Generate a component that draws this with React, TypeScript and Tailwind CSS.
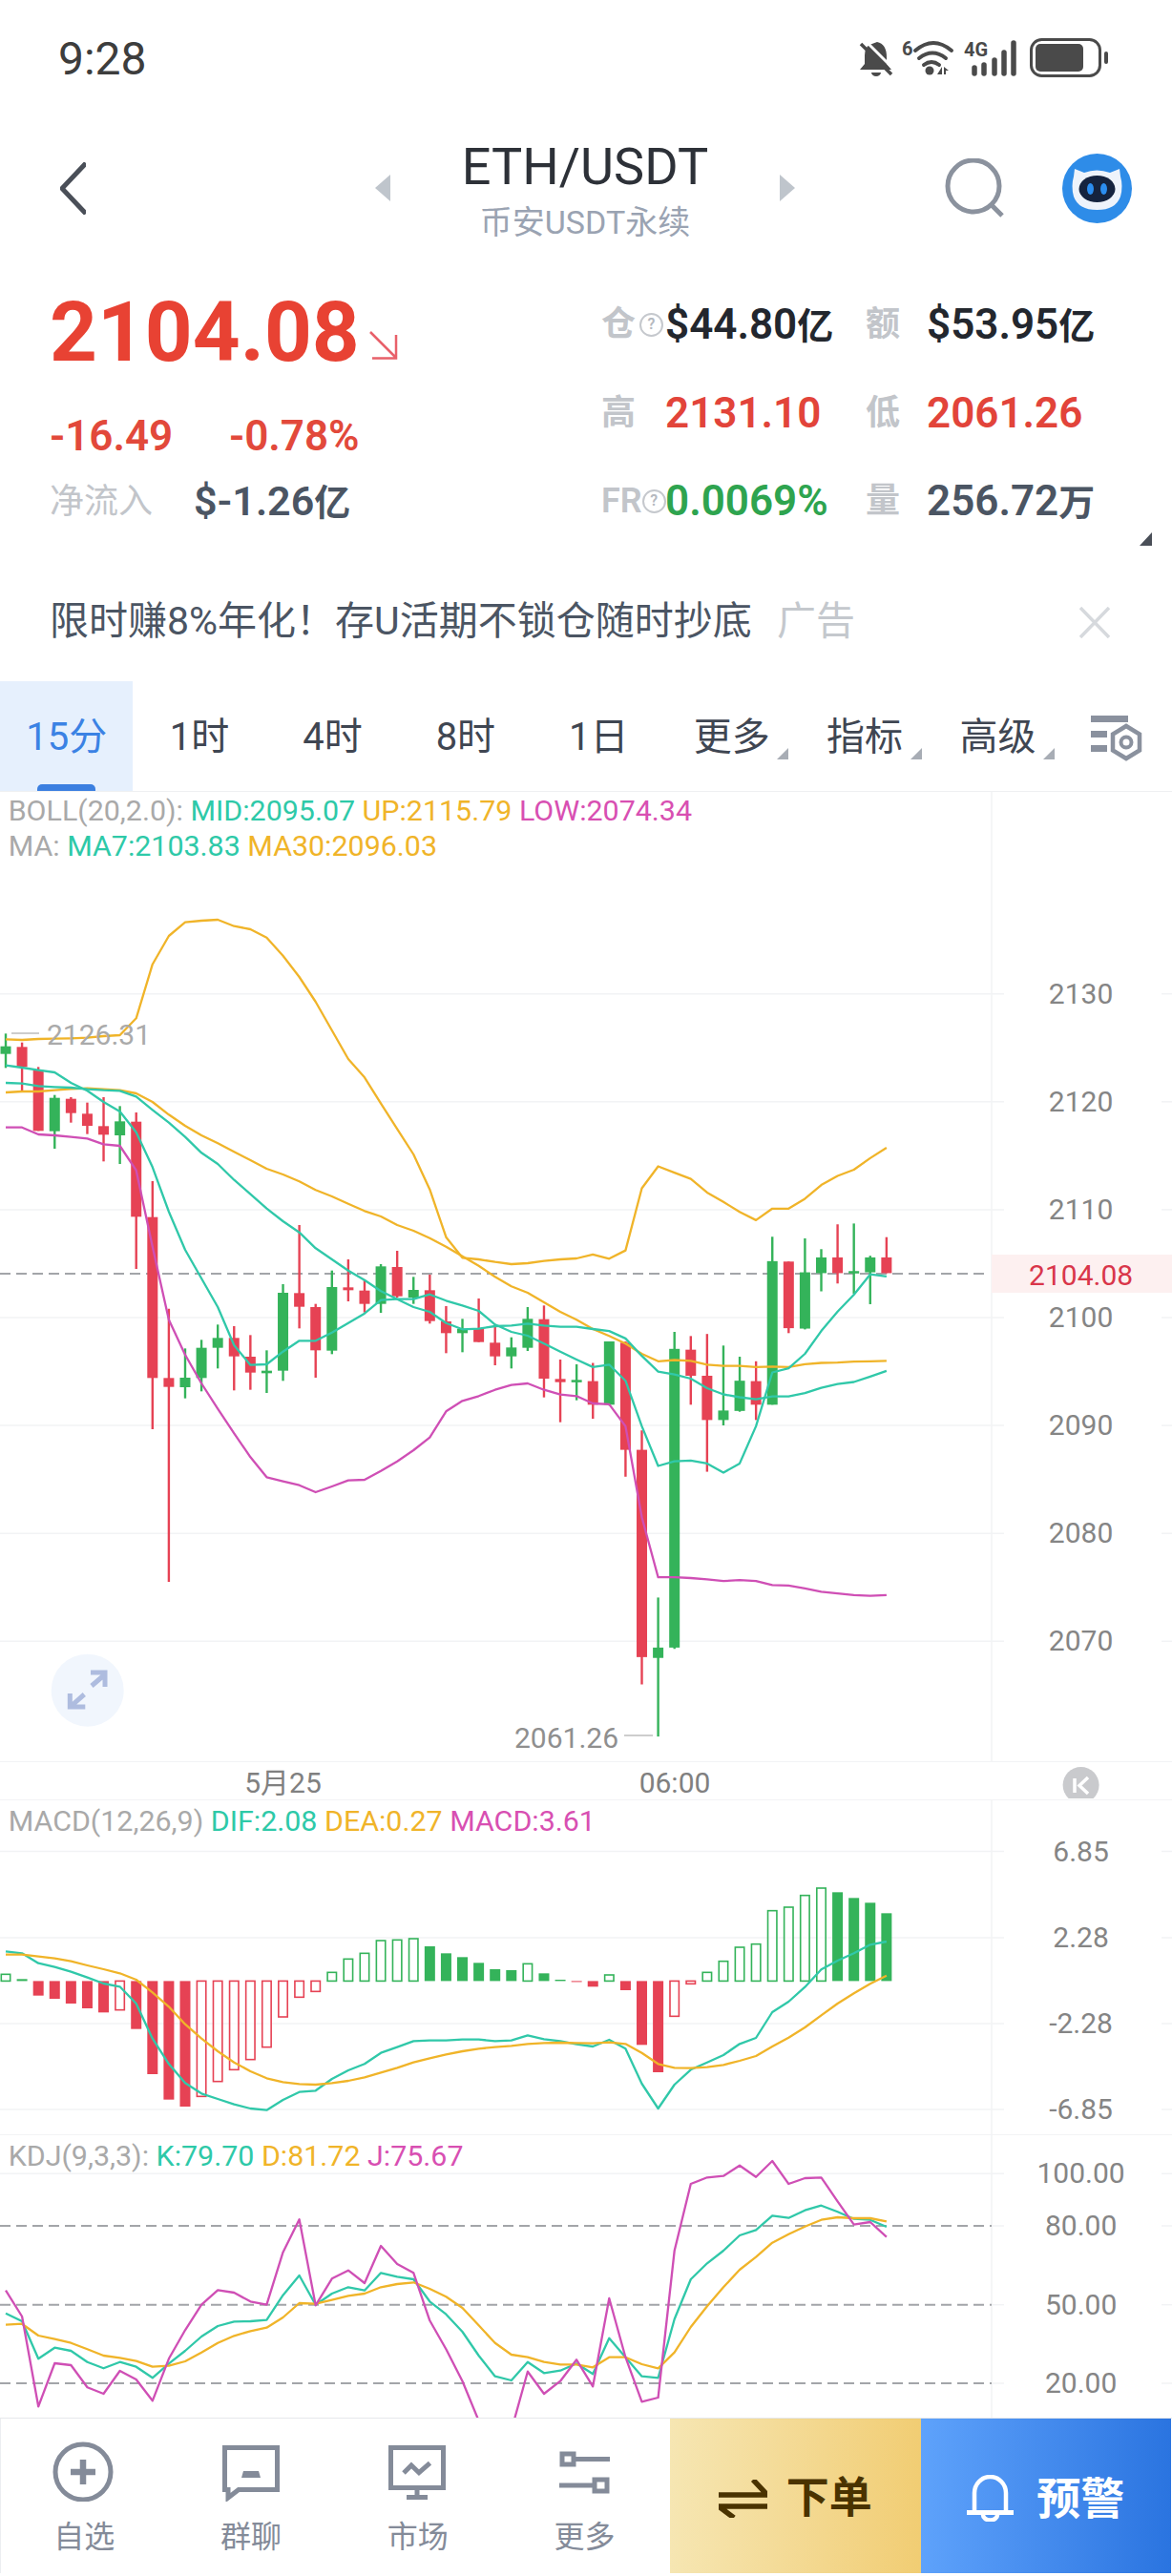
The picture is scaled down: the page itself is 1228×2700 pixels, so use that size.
import React from "react";

const RED = "#e64254";
const GREEN = "#34b35a";
const TEAL = "#30c8a9";
const YEL = "#f0b429";
const MAG = "#cf4fb5";
const GRID = "#f2f3f5";

const X = (i: number) => 6 + 17.09 * i;
const z3 = (y: number) => 1000 + y / 3;
const z4 = (y: number) => 1200 + y / 2.306;

type C = [number, number, number, number, number];
// wickTop, bodyTop, bodyBottom, wickBottom, 1=red 0=green
const c3: C[] = [
  [250, 290, 314, 358, 0], [278, 292, 355, 430, 1], [355, 365, 556, 556, 1], [443, 452, 557, 612, 0],
  [450, 455, 500, 530, 1], [467, 502, 540, 566, 1], [450, 541, 568, 652, 1], [478, 526, 570, 660, 0],
  [498, 527, 826, 990, 1], [714, 827, 1333, 1494, 1], [1115, 1333, 1361, 1974, 1], [1240, 1332, 1362, 1397, 0],
  [1213, 1238, 1333, 1375, 0], [1165, 1207, 1238, 1303, 0], [1170, 1207, 1265, 1372, 1], [1198, 1266, 1316, 1370, 1],
  [1246, 1310, 1318, 1380, 0], [1038, 1065, 1310, 1342, 0], [852, 1066, 1109, 1177, 1], [1100, 1110, 1246, 1332, 1],
  [995, 1047, 1247, 1258, 0], [960, 1048, 1057, 1092, 1], [1026, 1058, 1100, 1127, 1], [975, 982, 1100, 1128, 0],
  [933, 984, 1076, 1080, 1], [1015, 1056, 1080, 1100, 0], [1008, 1057, 1154, 1162, 1], [1107, 1155, 1192, 1255, 1],
  [1147, 1178, 1192, 1252, 0], [1083, 1178, 1220, 1220, 1], [1165, 1222, 1265, 1293, 1], [1205, 1237, 1265, 1303, 0],
  [1110, 1147, 1238, 1248, 0], [1105, 1148, 1335, 1394, 1], [1275, 1336, 1346, 1472, 1], [1290, 1339, 1344, 1403, 0],
];
const c4: C[] = [
  [527, 571, 628, 662, 1], [475, 475, 628, 630, 0], [475, 478, 737, 802, 1], [690, 737, 1238, 1304, 1],
  [1094, 1215, 1240, 1430, 0], [452, 493, 1215, 1218, 0], [462, 495, 558, 628, 1], [457, 558, 665, 790, 1],
  [485, 642, 665, 678, 0], [512, 570, 643, 645, 0], [523, 571, 628, 665, 1], [222, 281, 628, 628, 0],
  [282, 282, 443, 455, 1], [226, 308, 444, 446, 0], [252, 272, 310, 354, 0], [192, 272, 310, 335, 1],
  [190, 305, 309, 360, 0], [268, 272, 308, 385, 0], [223, 272, 310, 310, 1],
];
const candles = [
  ...c3.map((c) => [z3(c[0]), z3(c[1]), z3(c[2]), z3(c[3]), c[4]]),
  ...c4.map((c) => [z4(c[0]), z4(c[1]), z4(c[2]), z4(c[3]), c[4]]),
];

const mk = (a: number[], b: number[], fa: (n: number) => number, fb: (n: number) => number) =>
  [...a.map(fa), ...b.map(fb)].map((y, i) => `${X(i).toFixed(1)},${y.toFixed(1)}`).join(" ");

const up = mk(
  [268, 270, 267, 266, 265, 263, 258, 255, 202, 32, -57, -100, -105, -108, -88, -78, -52, 5, 72, 150, 240, 330, 388, 470, 550, 630, 740, 890, 955, 960, 968, 975, 972, 965, 960, 957],
  [265, 275, 255, 105, 52, 67, 82, 115, 138, 162, 182, 154, 154, 130, 97, 75, 60, 32, 7], z3, z4);
const mid = mk(
  [405, 407, 415, 418, 420, 425, 428, 430, 448, 490, 530, 575, 625, 660, 710, 755, 800, 840, 875, 925, 960, 995, 1025, 1060, 1085, 1110, 1125, 1160, 1180, 1178, 1170, 1168, 1162, 1168, 1172, 1172],
  [445, 450, 468, 510, 548, 555, 565, 588, 603, 610, 615, 608, 608, 600, 587, 578, 573, 560, 546], z3, z4);
const ma7 = mk(
  [350, 357, 365, 372, 405, 430, 465, 495, 560, 670, 810, 930, 1020, 1110, 1230, 1292, 1290, 1250, 1216, 1216, 1190, 1160, 1130, 1088, 1085, 1085, 1070, 1090, 1105, 1122, 1165, 1188, 1200, 1225, 1250, 1275],
  [537, 531, 570, 680, 776, 765, 763, 770, 792, 770, 680, 550, 540, 505, 450, 403, 362, 313, 318], z3, z4);
const ma30 = mk(
  [435, 432, 432, 428, 424, 422, 425, 428, 438, 465, 505, 540, 570, 595, 622, 648, 675, 693, 715, 742, 762, 785, 808, 825, 852, 870, 893, 920, 950, 980, 1015, 1045, 1065, 1095, 1125, 1150],
  [445, 462, 480, 505, 523, 520, 522, 531, 534, 534, 537, 536, 537, 530, 527, 526, 524, 523, 522], z3, z4);
const low = mk(
  [545, 545, 567, 570, 575, 580, 598, 603, 680, 920, 1150, 1260, 1350, 1430, 1507, 1582, 1645, 1658, 1670, 1692, 1674, 1655, 1653, 1625, 1595, 1560, 1520, 1438, 1405, 1390, 1370, 1355, 1350, 1370, 1385, 1390],
  [625, 627, 680, 900, 1045, 1045, 1047, 1050, 1054, 1052, 1054, 1064, 1065, 1072, 1080, 1084, 1088, 1090, 1088], z3, z4);

const z5 = (y: number) => 1860 + y / 3;
const z6 = (y: number) => 1880 + y / 3;
const z7 = (y: number) => 2230 + y / 3;
const Z = 2076.4;

// [edge y in zoom coordinates, filled?, red?]
const m5: [number, number, number][] = [
  [628, 0, 0], [643, 1, 0], [695, 1, 1], [705, 1, 1], [720, 1, 1], [735, 1, 1], [748, 1, 1], [740, 0, 1], [800, 1, 1], [942, 1, 1],
  [1022, 1, 1], [1044, 1, 1], [1012, 0, 1], [965, 0, 1], [928, 0, 1], [896, 0, 1], [857, 0, 1], [762, 0, 1], [700, 0, 1], [682, 0, 1],
  [622, 0, 0], [580, 0, 0], [562, 0, 0], [522, 0, 0], [520, 0, 0], [516, 0, 0], [540, 1, 0], [562, 1, 0], [574, 1, 0], [592, 1, 0],
  [612, 1, 0], [615, 1, 0], [595, 0, 0], [625, 1, 0], [645, 1, 0],
];
const m6: [number, number, number][] = [
  [591, 1, 1], [607, 1, 1], [570, 0, 0], [618, 1, 1], [790, 1, 1], [876, 1, 1], [700, 0, 1], [598, 0, 1], [562, 0, 0], [527, 0, 0],
  [483, 0, 0], [473, 0, 0], [368, 0, 0], [357, 0, 0], [320, 0, 0], [297, 0, 0], [310, 1, 0], [328, 1, 0], [343, 1, 0], [376, 1, 0],
];
const macdBars = [
  ...m5.map((b) => [z5(b[0]), b[1], b[2]]),
  ...m6.map((b) => [z6(b[0]), b[1], b[2]]),
];
const dif = mk(
  [556, 562, 593, 605, 620, 638, 657, 667, 720, 830, 910, 970, 1003, 1020, 1037, 1050, 1055, 1023, 998, 994, 957, 930, 910, 875, 857, 838, 836, 836, 833, 833, 838, 836, 820, 832, 838],
  [788, 795, 774, 802, 912, 990, 915, 868, 845, 822, 787, 768, 687, 654, 608, 553, 525, 502, 475, 465], z5, z6);
const dea = mk(
  [566, 566, 572, 578, 587, 600, 612, 625, 645, 685, 730, 785, 830, 870, 905, 933, 955, 967, 973, 975, 970, 963, 952, 937, 922, 905, 892, 880, 870, 862, 857, 853, 847, 844, 843],
  [784, 785, 782, 787, 815, 850, 862, 863, 860, 853, 840, 825, 795, 767, 735, 697, 660, 628, 598, 572], z5, z6);

const kL = mk(
  [587, 612, 730, 695, 705, 740, 760, 740, 755, 790, 745, 705, 660, 627, 613, 612, 608, 530, 468, 560, 525, 505, 515, 460, 472, 480, 550, 590, 645, 720, 785, 798, 740, 775, 767],
  [745, 778, 665, 725, 785, 790, 605, 480, 430, 390, 342, 325, 280, 287, 263, 248, 268, 290, 293, 315], z7, z7);
const dL = mk(
  [623, 620, 657, 668, 680, 700, 720, 727, 737, 755, 752, 738, 710, 680, 658, 643, 632, 600, 555, 557, 545, 532, 525, 505, 495, 490, 510, 535, 570, 625, 680, 717, 725, 740, 748],
  [748, 757, 725, 725, 747, 760, 710, 630, 565, 505, 450, 410, 365, 338, 314, 293, 285, 288, 288, 298], z7, z7);
const jL = mk(
  [515, 597, 880, 744, 750, 820, 840, 768, 795, 862, 730, 640, 560, 514, 522, 550, 560, 395, 292, 562, 478, 452, 492, 375, 432, 460, 610, 700, 800, 925, 1020, 955, 770, 840, 800],
  [733, 817, 540, 725, 865, 852, 390, 180, 160, 155, 122, 158, 108, 180, 162, 160, 235, 308, 300, 347], z7, z7);

const Line = ({ p, c }: { p: string; c: string }) => (
  <polyline points={p} fill="none" stroke={c} strokeWidth={2.3} strokeLinejoin="round" />
);

const HGrid = ({ y, dash }: { y: number; dash?: boolean }) => (
  <>
    <line x1={0} x2={dash ? 1039 : 1052} y1={y} y2={y} stroke={dash ? "#a3a5a9" : GRID} strokeWidth={dash ? 2 : 1.5} strokeDasharray={dash ? "11 6" : undefined} />
    {dash && <line x1={1039} x2={1052} y1={y} y2={y} stroke={GRID} strokeWidth={1.5} />}
    <line x1={1217} x2={1228} y1={y} y2={y} stroke={GRID} strokeWidth={1.5} />
  </>
);

const Tick = ({ y, t }: { y: number; t: string }) => (
  <text x={1132.6} y={y + 10} textAnchor="middle" fontSize={30} fill="#858585">{t}</text>
);

const Legend = ({ parts }: { parts: [string, string][] }) => (
  <div className="whitespace-pre">
    {parts.map(([t, c], i) => (
      <span key={i} style={{ color: c }}>{t}</span>
    ))}
  </div>
);

const L_GRAY = "#a9a9a9";
const L_TEAL = "#2ec9a8";
const L_YEL = "#f0b429";
const L_MAG = "#d84fb2";

const Tab = ({ t, active, tri }: { t: string; active?: boolean; tri?: boolean }) => (
  <div className={`relative flex h-full w-[139.4px] items-center justify-center text-[40px] ${active ? "bg-[#e6f0fd] text-[#3b82e4]" : "text-[#3f4652]"}`}>
    <span className="mt-[2px]">{t}</span>
    {active && <div className="absolute bottom-0 left-[39px] h-[7px] w-[61px] rounded-t-[5px] bg-[#3b7fe0]" />}
    {tri && (
      <svg className="absolute bottom-[33px] right-[10px]" width="12" height="12" viewBox="0 0 12 12">
        <path d="M12 0V12H0Z" fill="#a8adb5" />
      </svg>
    )}
  </div>
);

const Qmark = () => (
  <span className="inline-flex h-[25px] w-[25px] shrink-0 items-center justify-center rounded-full border-2 border-[#c5c8cd] text-[16px] leading-none text-[#b5b9bf]">?</span>
);

const Label = ({ children }: { children: React.ReactNode }) => (
  <div className="flex items-center gap-[4px] text-[36px] leading-[44px] text-[#c2c5ca]">{children}</div>
);

const Unit = ({ children }: { children: React.ReactNode }) => (
  <span className="text-[38px]">{children}</span>
);

const NavIcon = ({ vb, children }: { vb: string; children: React.ReactNode }) => (
  <svg width="68" height="64" viewBox={vb} fill="none" stroke="#848b99" strokeWidth={5}>{children}</svg>
);

const NavItem = ({ icon, t }: { icon: React.ReactNode; t: string }) => (
  <div className="flex flex-col items-center pt-[23px]">
    {icon}
    <div className="mt-[17px] text-[32px] leading-[40px] text-[#848b99]">{t}</div>
  </div>
);

export default function App() {
  return (
    <div className="flex h-[2700px] w-[1228px] flex-col overflow-hidden bg-white font-['Roboto','Noto_Sans_CJK_SC',sans-serif]">
      {/* status bar */}
      <div className="flex h-[130px] shrink-0 items-start">
        <div className="ml-[61px] mt-[37px] text-[48px] leading-[50px] text-[#3d3d3d]">9:28</div>
        <svg className="ml-auto mr-[48px] mt-[30px]" width="290" height="60" viewBox="0 0 290 60">
          <path d="M29 14Q39 16 39 30V37L44 43H11L16 37V28Q16 20 21 17Z" fill="#4a4a4a" />
          <path d="M23 46a5 4 0 0 0 10 0Z" fill="#4a4a4a" />
          <line x1={16} y1={12} x2={48} y2={44} stroke="#fff" strokeWidth={3} />
          <line x1={12} y1={16} x2={44} y2={48} stroke="#4a4a4a" strokeWidth={3.5} />
          <text x={55} y={28} fontSize={20} fontWeight={700} fill="#4a4a4a">6</text>
          <g fill="none" stroke="#4a4a4a" strokeWidth={4} strokeLinecap="round">
            <path d="M69 23Q88 7 107 23" />
            <path d="M73 31Q87 20 101 31" />
            <path d="M78 38Q86 32 94 38" />
          </g>
          <circle cx={84} cy={44} r={4.5} fill="#4a4a4a" />
          <path d="M92 48L97 40V48ZM99 40L104 44H101V48H99Z" fill="#4a4a4a" />
          <text x={120} y={29} fontSize={20} fontWeight={700} fill="#4a4a4a">4G</text>
          <g stroke="#4a4a4a" strokeWidth={5.5} strokeLinecap="round">
            <line x1={131} y1={41} x2={131} y2={47} />
            <line x1={141} y1={38} x2={141} y2={47} />
            <line x1={152} y1={33} x2={152} y2={47} />
            <line x1={162} y1={25} x2={162} y2={47} />
            <line x1={172} y1={15} x2={172} y2={47} />
          </g>
          <rect x={190.5} y={11.5} width={72} height={38} rx={11} fill="none" stroke="#4a4a4a" strokeWidth={3} />
          <rect x={195} y={16} width={50} height={29} rx={5} fill="#4a4a4a" />
          <rect x={267} y={24} width={4} height={13} rx={2} fill="#4a4a4a" />
        </svg>
      </div>

      {/* nav */}
      <div className="flex h-[134px] shrink-0 items-center">
        <svg className="ml-[63px]" width="27" height="55" viewBox="0 0 27 55" fill="none" stroke="#4a4f58" strokeWidth={5}>
          <path d="M27 1L2 27.5L27 54" />
        </svg>
        <div className="ml-[303px] flex w-[440px] items-center justify-between">
          <svg width="16" height="28" viewBox="0 0 16 28"><path d="M16 0V28L0 14Z" fill="#bfc5cc" /></svg>
          <div className="mt-[2px] flex flex-col items-center">
            <div className="text-[54px] leading-[64px] text-[#2d3138]">ETH/USDT</div>
            <div className="mt-[6px] text-[34px] leading-[40px] text-[#9aa3b2]">币安USDT永续</div>
          </div>
          <svg width="16" height="28" viewBox="0 0 16 28"><path d="M0 0V28L16 14Z" fill="#bfc5cc" /></svg>
        </div>
        <svg className="ml-[157px]" width="62" height="62" viewBox="0 0 62 62" fill="none" stroke="#8b929e" strokeWidth={5}>
          <ellipse cx={30} cy={29} rx={27} ry={27} />
          <path d="M49 49L60 60" />
        </svg>
        <svg className="ml-[61px]" width="73" height="73" viewBox="0 0 73 73">
          <circle cx={36.5} cy={36.5} r={36.5} fill="#2e8ce8" />
          <path d="M12 24L13 16L23 20Q36 15 50 20L60 16L61 24Q64 34 61 45Q56 59 36.5 59Q17 59 12 45Q9 34 12 24Z" fill="#eef3fb" />
          <ellipse cx={36.5} cy={37} rx={19} ry={14} fill="#15233f" />
          <ellipse cx={29.5} cy={37} rx={3.5} ry={6} fill="#2b8df0" />
          <ellipse cx={43.5} cy={37} rx={3.5} ry={6} fill="#2b8df0" />
        </svg>
      </div>

      {/* stats */}
      <div className="relative flex h-[326px] shrink-0">
        <div className="w-[630px] pl-[52px] pt-[40px]">
          <div className="flex items-end">
            <div className="text-[87px] font-bold leading-[88px] text-[#e84233]">2104.08</div>
            <svg className="mb-[15px] ml-[10px]" width="30" height="30" viewBox="0 0 30 30" fill="none" stroke="#e8606a" strokeWidth={2.5}>
              <path d="M1 1L28 28M28 4V28.5H3" />
            </svg>
          </div>
          <div className="mt-[43px] flex text-[44px] font-semibold leading-[44px] text-[#e2493b]">
            <span className="w-[188px]">-16.49</span>
            <span>-0.78%</span>
          </div>
          <div className="mt-[24px] flex items-center">
            <span className="w-[151px] text-[36px] leading-[44px] text-[#c2c5ca]">净流入</span>
            <span className="text-[43px] font-semibold leading-[44px] text-[#4b5563]">$-1.26<Unit>亿</Unit></span>
          </div>
        </div>
        <div className="grid flex-1 grid-cols-[67px_210px_64px_1fr] grid-rows-[92.5px_92.5px_92.5px] items-center pt-[30px] text-[44px] font-semibold">
          <Label>仓<Qmark /></Label>
          <div className="text-[#23272e]">$44.80<Unit>亿</Unit></div>
          <Label>额</Label>
          <div className="text-[#23272e]">$53.95<Unit>亿</Unit></div>
          <Label>高</Label>
          <div className="text-[#e2443a]">2131.10</div>
          <Label>低</Label>
          <div className="text-[#e2443a]">2061.26</div>
          <Label><span className="mr-[-4px]">FR</span><Qmark /></Label>
          <div className="text-[#2ea44f]">0.0069%</div>
          <Label>量</Label>
          <div className="text-[#4b5563]">256.72<Unit>万</Unit></div>
        </div>
        <svg className="absolute right-[21px] top-[294px]" width="13" height="14" viewBox="0 0 13 14">
          <path d="M13 0V14H0Z" fill="#4a4f58" />
        </svg>
      </div>

      {/* banner */}
      <div className="flex h-[124px] shrink-0 items-center pl-[52px]">
        <span className="w-[762px] text-[41px] text-[#4b5563]">限时赚8%年化！存U活期不锁仓随时抄底</span>
        <span className="text-[41px] text-[#c4c8cd]">广告</span>
        <svg className="ml-[235px]" width="32" height="33" viewBox="0 0 32 33" stroke="#d6d9dd" strokeWidth={3.5}>
          <path d="M1 1L31 32M31 1L1 32" />
        </svg>
      </div>

      {/* tabs */}
      <div className="flex h-[116px] shrink-0 items-stretch border-b-[1.5px] border-[#eff0f2]">
        <Tab t="15分" active />
        <Tab t="1时" />
        <Tab t="4时" />
        <Tab t="8时" />
        <Tab t="1日" />
        <Tab t="更多" tri />
        <Tab t="指标" tri />
        <Tab t="高级" tri />
        <svg className="ml-[28px] mt-[36px]" width="56" height="48" viewBox="0 0 56 48" fill="#8a919e">
          <rect x={0} y={0} width={39} height={7} />
          <rect x={0} y={16} width={17} height={7} />
          <rect x={0} y={31} width={17} height={7} />
          <path d="M37 11L51 19.5V36.5L37 45L23 36.5V19.5Z" fill="none" stroke="#8a919e" strokeWidth={4.5} />
          <circle cx={37} cy={28} r={5.5} fill="none" stroke="#8a919e" strokeWidth={4} />
        </svg>
      </div>

      {/* main chart */}
      <div className="relative h-[1016px] shrink-0 text-[30.4px] leading-[37px]">
        <svg className="absolute inset-0" width="1228" height="1016" viewBox="0 830 1228 1016">
          <line x1={1039} x2={1039} y1={830} y2={1846} stroke={GRID} strokeWidth={1.5} />
          {[2130, 2120, 2110, 2100, 2090, 2080, 2070].map((p) => (
            <HGrid key={p} y={1381 + (2100 - p) * 11.31} />
          ))}
          <rect x={1039} y={1315} width={189} height={40} fill="#fdf0f0" />
          <line x1={0} x2={1035} y1={1335} y2={1335} stroke="#a3a5a9" strokeWidth={2} strokeDasharray="11 6" />
          {candles.map((c, i) => {
            const col = c[4] ? RED : GREEN;
            return (
              <g key={i}>
                <line x1={X(i)} x2={X(i)} y1={c[0]} y2={c[3]} stroke={col} strokeWidth={2.4} />
                <rect x={X(i) - 5.5} y={c[1]} width={11} height={Math.max(c[2] - c[1], 2.5)} fill={col} />
              </g>
            );
          })}
          <Line p={up} c={YEL} />
          <Line p={ma30} c={YEL} />
          <Line p={mid} c={TEAL} />
          <Line p={ma7} c={TEAL} />
          <Line p={low} c={MAG} />
          <line x1={12} x2={41} y1={1083} y2={1083} stroke="#bdbdbd" strokeWidth={1.5} />
          <text x={49} y={1095} fontSize={30} fill="#aaaaaa">2126.31</text>
          <text x={539} y={1832} fontSize={30} fill="#8f8f8f">2061.26</text>
          <line x1={654} x2={684} y1={1819} y2={1819} stroke="#bdbdbd" strokeWidth={1.5} />
          {[2130, 2120, 2110, 2100, 2090, 2080, 2070].map((p) => (
            <Tick key={p} y={1381 + (2100 - p) * 11.31} t={String(p)} />
          ))}
          <text x={1132.6} y={1347} textAnchor="middle" fontSize={30} fill="#d9364a">2104.08</text>
          <circle cx={91.7} cy={1771.7} r={38} fill="#f1f6fd" />
          <g fill="none" stroke="#aebcdf" strokeWidth={5}>
            <path d="M96 1767L110 1755M95 1753H110V1768M88.3 1776L74.3 1788.3M73.3 1775V1789H89.3" />
          </g>
        </svg>
        <div className="relative pl-[8.7px] pt-[1px]">
          <Legend parts={[["BOLL(20,2.0): ", L_GRAY], ["MID:2095.07 ", L_TEAL], ["UP:2115.79 ", L_YEL], ["LOW:2074.34", L_MAG]]} />
          <Legend parts={[["MA: ", L_GRAY], ["MA7:2103.83 ", L_TEAL], ["MA30:2096.03", L_YEL]]} />
        </div>
      </div>

      {/* x axis */}
      <div className="h-[41px] shrink-0 border-y-[1.5px] border-[#f2f3f5]">
        <svg width="1228" height="38" viewBox="0 1847 1228 38">
          <text x={296.5} y={1879} textAnchor="middle" fontSize={30} fill="#808080">5月25</text>
          <text x={707} y={1879} textAnchor="middle" fontSize={30} fill="#808080">06:00</text>
          <circle cx={1132.6} cy={1871} r={19} fill="#c9cacd" />
          <path d="M1126 1864V1879M1140 1863L1131 1871.5L1140 1880" fill="none" stroke="#fff" strokeWidth={3.5} />
        </svg>
      </div>

      {/* MACD */}
      <div className="relative h-[351px] shrink-0 border-b-[1.5px] border-[#f2f3f5] pl-[8.7px] pt-[1px] text-[30.4px] leading-[37px]">
        <svg className="absolute inset-0" width="1228" height="350" viewBox="0 1887 1228 350">
          <line x1={1039} x2={1039} y1={1887} y2={2238} stroke={GRID} strokeWidth={1.5} />
          {[1940.5, 2031, 2121, 2211].map((y) => (
            <HGrid key={y} y={y} />
          ))}
          {macdBars.map((b, i) => {
            const col = b[2] ? RED : GREEN;
            const top = Math.min(b[0], Z);
            const h = Math.max(Math.abs(b[0] - Z), 1);
            return b[1] ? (
              <rect key={i} x={X(i) - 5.5} y={top} width={11} height={h} fill={col} />
            ) : (
              <rect key={i} x={X(i) - 4.7} y={top} width={9.4} height={h} fill="#fff" fillOpacity={0.6} stroke={col} strokeWidth={1.6} />
            );
          })}
          <Line p={dif} c={TEAL} />
          <Line p={dea} c={YEL} />
          <Tick y={1940.5} t="6.85" />
          <Tick y={2031} t="2.28" />
          <Tick y={2121} t="-2.28" />
          <Tick y={2211} t="-6.85" />
        </svg>
        <div className="relative pt-[2px]">
          <Legend parts={[["MACD(12,26,9) ", L_GRAY], ["DIF:2.08 ", L_TEAL], ["DEA:0.27 ", L_YEL], ["MACD:3.61", L_MAG]]} />
        </div>
      </div>

      {/* KDJ */}
      <div className="relative h-[296px] shrink-0 overflow-hidden pl-[8.7px] text-[30.4px] leading-[37px]">
        <svg className="absolute inset-0" width="1228" height="296" viewBox="0 2239 1228 296">
          <line x1={1039} x2={1039} y1={2239} y2={2535} stroke={GRID} strokeWidth={1.5} />
          <HGrid y={2279.3} />
          <HGrid y={2334} dash />
          <HGrid y={2416.7} dash />
          <HGrid y={2499} dash />
          <Line p={kL} c={TEAL} />
          <Line p={dL} c={YEL} />
          <Line p={jL} c={MAG} />
          <Tick y={2279.3} t="100.00" />
          <Tick y={2334} t="80.00" />
          <Tick y={2416.7} t="50.00" />
          <Tick y={2499} t="20.00" />
        </svg>
        <div className="relative pt-[3px]">
          <Legend parts={[["KDJ(9,3,3): ", L_GRAY], ["K:79.70 ", L_TEAL], ["D:81.72 ", L_YEL], ["J:75.67", L_MAG]]} />
        </div>
      </div>

      {/* footer */}
      <div className="flex h-[165px] shrink-0 border-t-[1.5px] border-[#e5e7eb] pb-[2px]">
        <div className="grid w-[702px] grid-cols-4 border-l-[1.5px] border-[#eceef1] pr-[2px]">
          <NavItem
            t="自选"
            icon={
              <NavIcon vb="54 2558 68 64">
                <circle cx={87} cy={2591} r={29} />
                <path d="M87 2578V2604M74 2591H100" strokeWidth={6.5} />
              </NavIcon>
            }
          />
          <NavItem
            t="群聊"
            icon={
              <NavIcon vb="229 2558 68 64">
                <path d="M235.5 2565.5H290.5V2609.5H250L239 2618V2609.5H235.5Z" />
                <path d="M253 2597L255 2590H271L273 2597Z" fill="#848b99" stroke="none" />
              </NavIcon>
            }
          />
          <NavItem
            t="市场"
            icon={
              <NavIcon vb="405 2558 68 64">
                <rect x={410.5} y={2565.5} width={55} height={42} />
                <path d="M438 2608V2617M427 2617.5H449" />
                <path d="M424 2592L432 2584L440 2591.7L451.5 2581.7" />
              </NavIcon>
            }
          />
          <NavItem
            t="更多"
            icon={
              <NavIcon vb="580 2558 68 64">
                <rect x={590} y={2572} width={12} height={11} />
                <path d="M602 2577.5H640M587 2605H623" />
                <rect x={624} y={2599} width={13} height={12} />
              </NavIcon>
            }
          />
        </div>
        <div className="flex w-[262.5px] items-center justify-center bg-linear-to-r from-[#f6e6b2] to-[#f1cd73] pt-[5px] text-[#4a3300]">
          <svg width="51" height="40" viewBox="0 0 51 40" fill="none" stroke="#4a3300" strokeWidth={5.5}>
            <path d="M0 16H51L36 0M51 28H0L16 40" />
          </svg>
          <span className="ml-[20px] text-[45px] font-bold leading-none">下单</span>
        </div>
        <div className="flex w-[262.5px] items-center justify-center bg-linear-to-r from-[#5ea2fb] to-[#2a74e0] pt-[5px] text-white">
          <svg width="49" height="49" viewBox="0 0 49 49" fill="none" stroke="#fff" strokeWidth={4.5}>
            <path d="M8 39V19a16.5 17 0 0 1 33 0V39" />
            <path d="M0 39.5H49" strokeWidth={5} />
            <path d="M17 42a7.5 5.5 0 0 0 15 0" />
          </svg>
          <span className="ml-[24px] text-[46px] font-bold leading-none">预警</span>
        </div>
      </div>
    </div>
  );
}
